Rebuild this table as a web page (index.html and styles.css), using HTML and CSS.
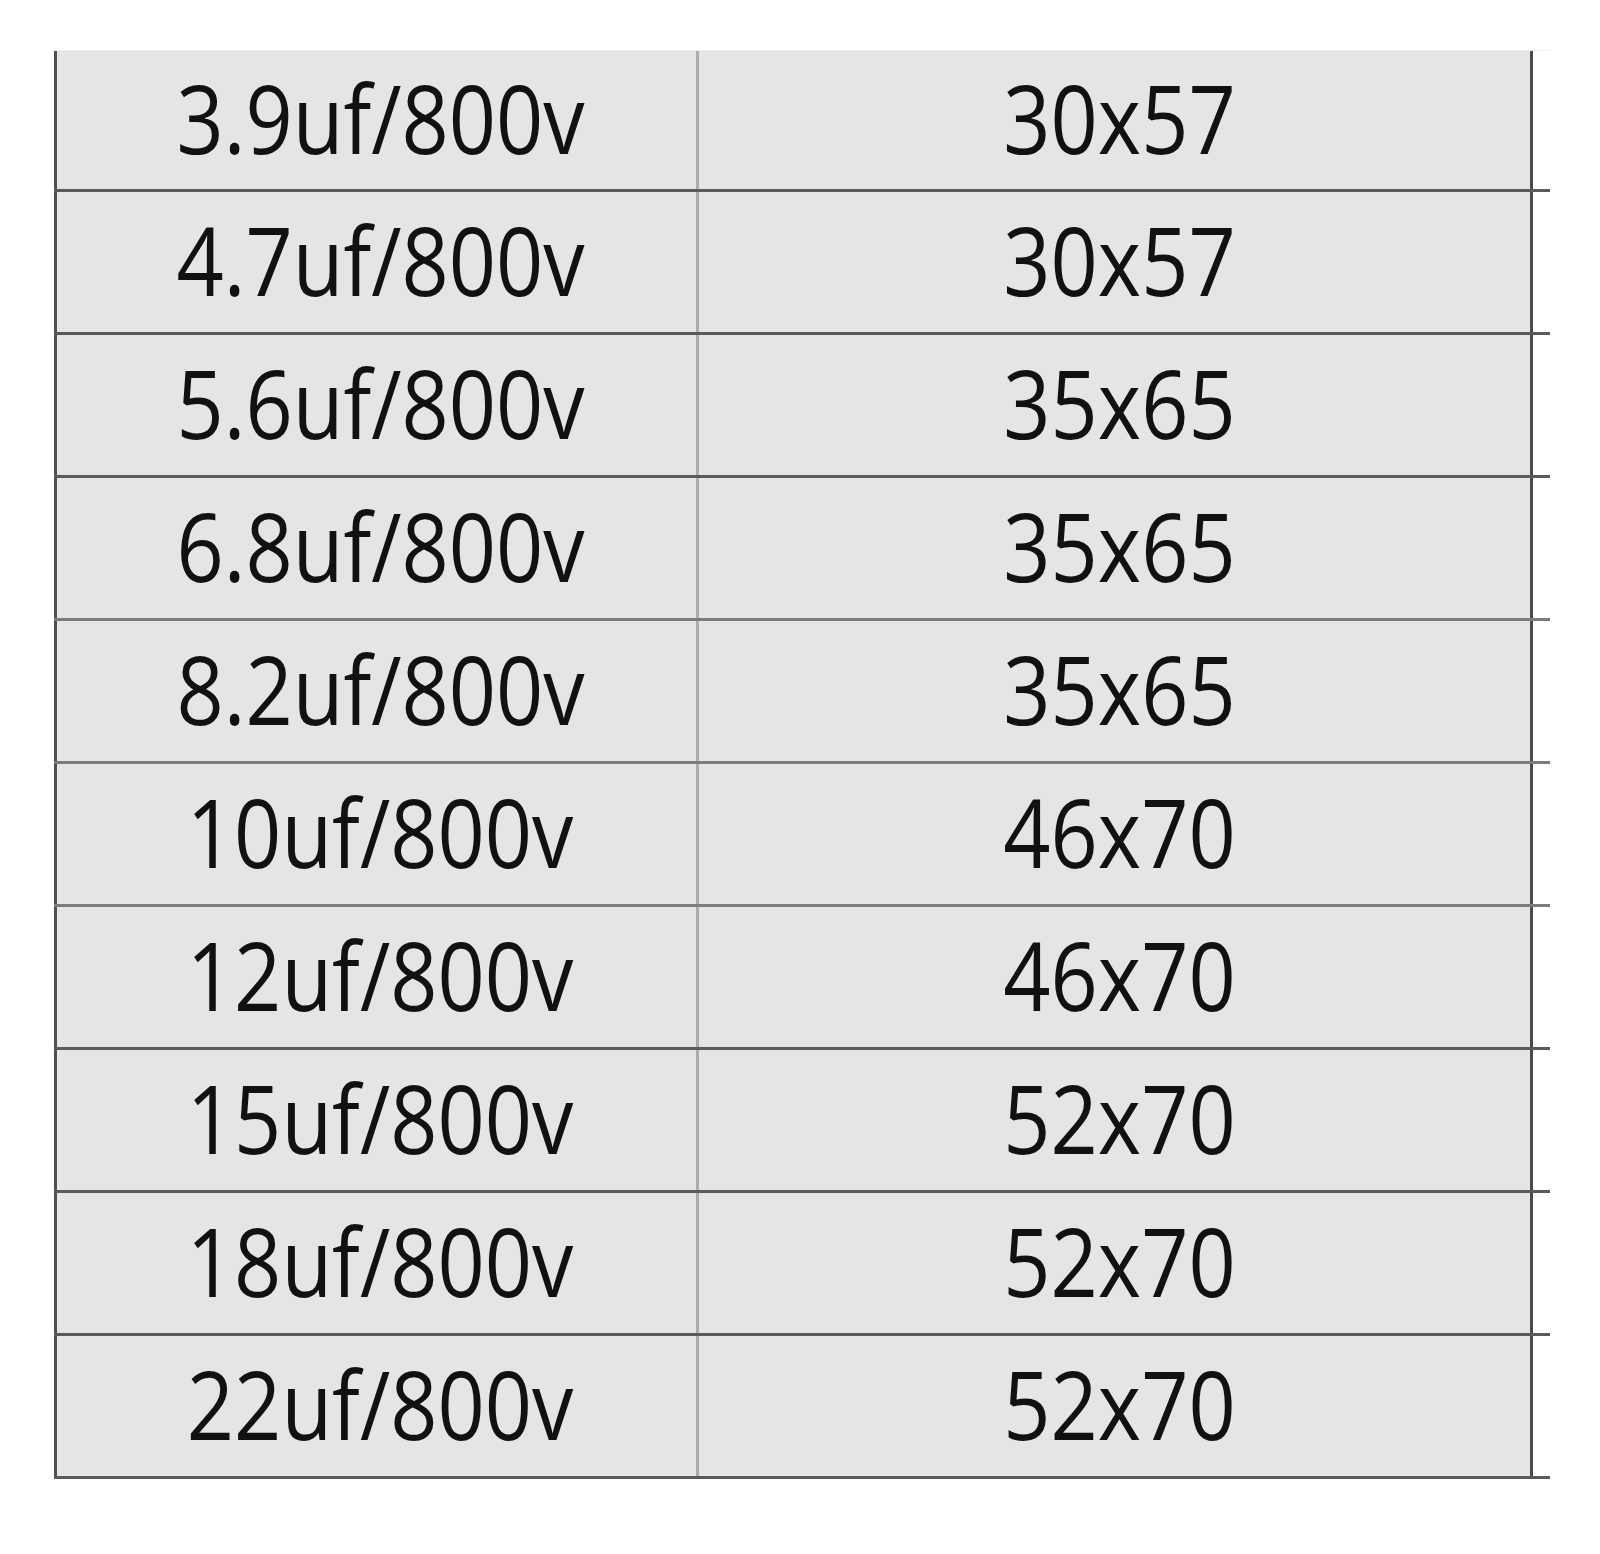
FILE: index.html
```html
<!DOCTYPE html>
<html>
<head>
<meta charset="utf-8">
<link rel="stylesheet" href="styles.css">
</head>
<body>
<div class="sheet">
  <div class="row r1"><div class="cell c1"><span class="txt">3.9uf/800v</span></div><div class="cell c2"><span class="txt">30x57</span></div><div class="tail"></div></div>
  <div class="row r2"><div class="cell c1"><span class="txt">4.7uf/800v</span></div><div class="cell c2"><span class="txt">30x57</span></div><div class="tail"></div></div>
  <div class="row r3"><div class="cell c1"><span class="txt">5.6uf/800v</span></div><div class="cell c2"><span class="txt">35x65</span></div><div class="tail"></div></div>
  <div class="row r4 light"><div class="cell c1"><span class="txt">6.8uf/800v</span></div><div class="cell c2"><span class="txt">35x65</span></div><div class="tail"></div></div>
  <div class="row r5 light"><div class="cell c1"><span class="txt">8.2uf/800v</span></div><div class="cell c2"><span class="txt">35x65</span></div><div class="tail"></div></div>
  <div class="row r6 light"><div class="cell c1"><span class="txt">10uf/800v</span></div><div class="cell c2"><span class="txt">46x70</span></div><div class="tail"></div></div>
  <div class="row r7"><div class="cell c1"><span class="txt">12uf/800v</span></div><div class="cell c2"><span class="txt">46x70</span></div><div class="tail"></div></div>
  <div class="row r8"><div class="cell c1"><span class="txt">15uf/800v</span></div><div class="cell c2"><span class="txt">52x70</span></div><div class="tail"></div></div>
  <div class="row r9"><div class="cell c1"><span class="txt">18uf/800v</span></div><div class="cell c2"><span class="txt">52x70</span></div><div class="tail"></div></div>
  <div class="row r10"><div class="cell c1"><span class="txt">22uf/800v</span></div><div class="cell c2"><span class="txt">52x70</span></div><div class="tail"></div></div>
</div>
</body>
</html>
```
FILE: styles.css
```css
html, body {
  margin: 0;
  padding: 0;
  background: #ffffff;
}

.sheet {
  padding: 50px 0 0 54px;
  width: 1496px;
  font-family: "Open Sans", "Noto Sans", sans-serif;
  font-size: 95px;
  color: #111111;
}

.row {
  display: grid;
  grid-template-columns: 645px 834px 14px;
  height: 140px;
  border-bottom: 3px solid #5a5a5a;
}

.row.r1 {
  height: 138px;
  border-top: 1px solid #f0f0f0;
}

.row.light {
  border-bottom-color: #7c7c7c;
}

.cell {
  display: flex;
  align-items: center;
  justify-content: center;
  padding-bottom: 6px;
  background: #e5e5e5;
  white-space: nowrap;
  line-height: 1;
}

.txt {
  display: inline-block;
  transform: scaleX(0.87);
}

.c1 {
  padding-left: 8px;
  border-left: 3px solid #4f4f4f;
  border-right: 3px solid #ababab;
}

.c2 {
  padding-left: 10px;
  border-right: 3px solid #4a4a4a;
}

.tail {
  background: #ffffff;
}
```
